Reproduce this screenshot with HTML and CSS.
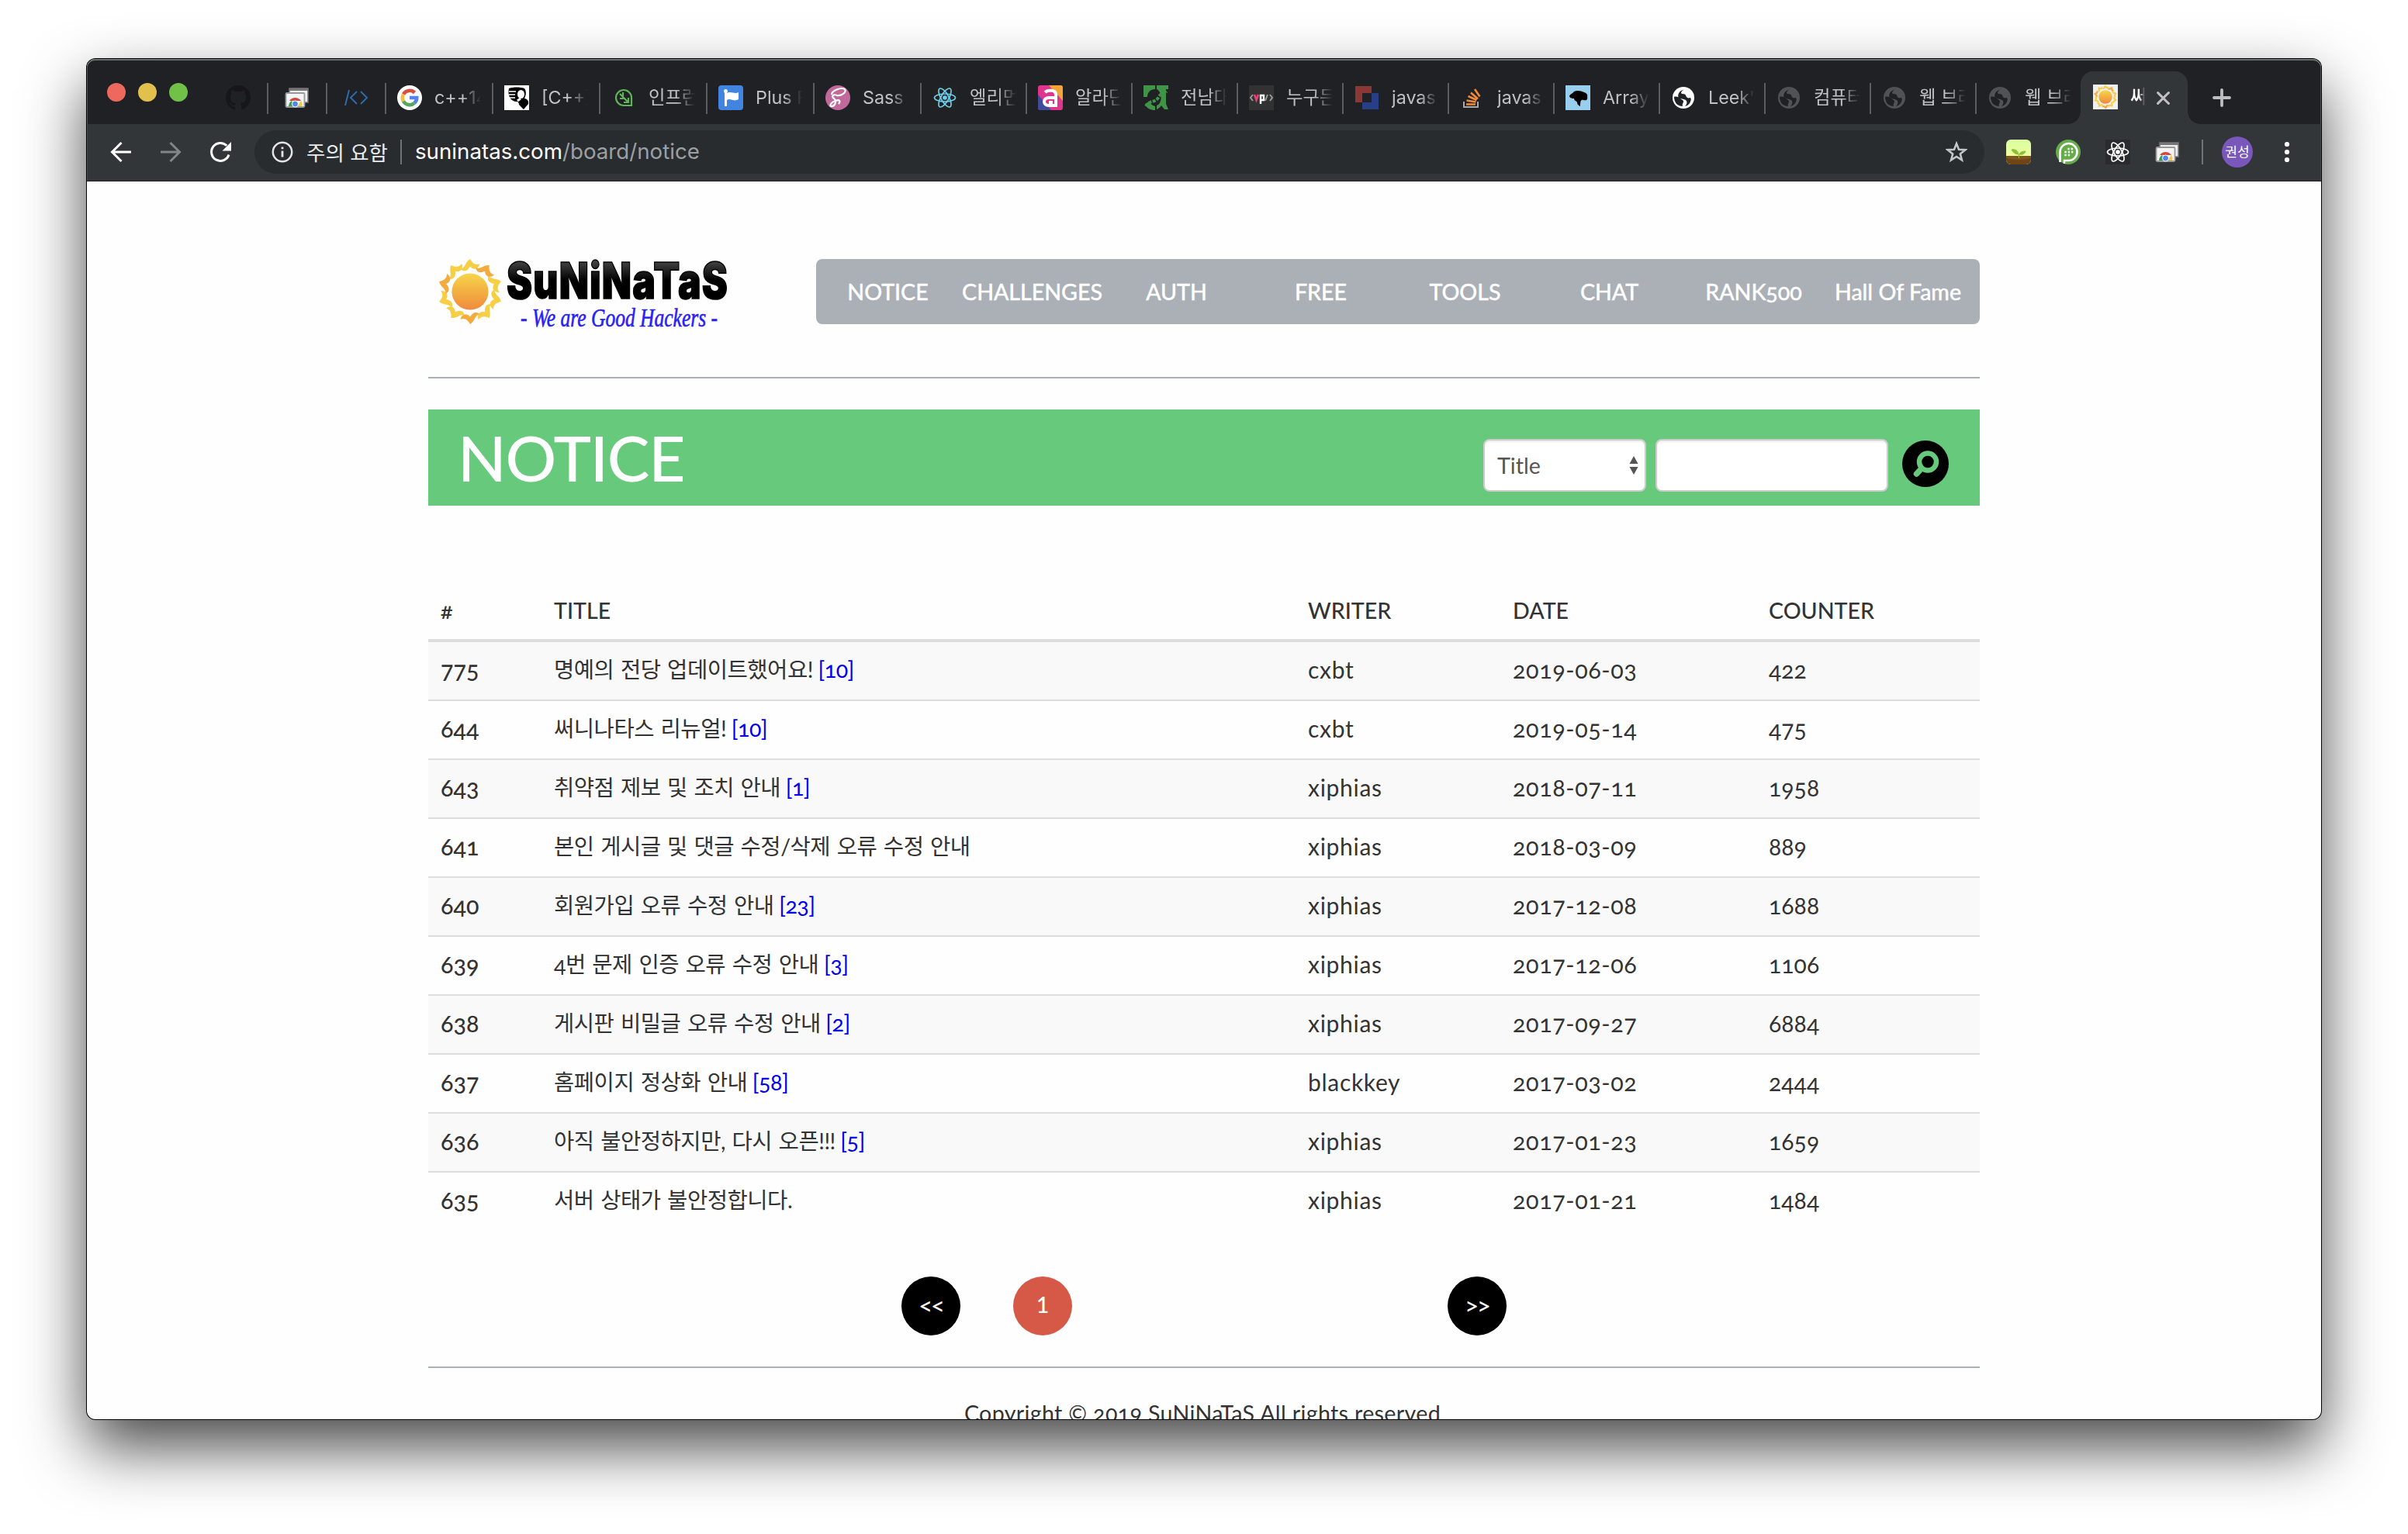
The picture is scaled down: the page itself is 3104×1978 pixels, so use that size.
FILE: index.html
```html
<!DOCTYPE html>
<html lang="ko">
<head>
<meta charset="utf-8">
<title>써니나타스</title>
<link rel="stylesheet" href="styles.css">
</head>
<body>
<svg class="defs" width="0" height="0">
  <defs>
    <linearGradient id="sunFill" x1="0" y1="0" x2="0" y2="1"><stop offset="0" stop-color="#f6d64a"/><stop offset="1" stop-color="#f08a3c"/></linearGradient>
    <linearGradient id="letterFill" x1="0" y1="0" x2="0" y2="1"><stop offset="0.15" stop-color="#4a4a4a"/><stop offset="0.5" stop-color="#000"/></linearGradient>
    <linearGradient id="sky" x1="0" y1="0" x2="0" y2="1"><stop offset="0" stop-color="#d9ffa0"/><stop offset="1" stop-color="#fbfba0"/></linearGradient>
    <path id="flame" d="M-12-28C-6-28-6-37 0-40C3-35 6-32 12-34C10-27 4-26 0-31C-3-26-7-23-12-28Z"/>
    <symbol id="sun" viewBox="-41 -41 82 82">
      <g fill="#f7cf45"><use href="#flame"/><use href="#flame" transform="rotate(72)"/><use href="#flame" transform="rotate(108)"/><use href="#flame" transform="rotate(144)"/><use href="#flame" transform="rotate(216)"/><use href="#flame" transform="rotate(252)"/><use href="#flame" transform="rotate(324)"/></g>
      <g fill="#f3ab3d"><use href="#flame" transform="rotate(36)"/><use href="#flame" transform="rotate(180)"/><use href="#flame" transform="rotate(288)"/></g>
      <circle r="22.5" fill="url(#sunFill)"/>
    </symbol>
    <symbol id="chromeShot" viewBox="0 0 32 32">
      <path d="M6 4h24v18H6z" fill="#eee" stroke="#777" stroke-width="1.6"/><path d="M6 4h24v3H6z" fill="#777"/>
      <rect x="1.500" y="10" width="24" height="18" rx="1.500" fill="#f4f4f4" stroke="#999" stroke-width="1.800"/>
      <path d="M5 27a8.500 8.500 0 0 1 4-7l3.500 7z" fill="#3d9e57"/><path d="M6 20a9 9 0 0 1 15 0z" fill="#cf4b3d"/><path d="M16 27l5-7a9 9 0 0 1 1.500 7z" fill="#f1c94b"/>
      <circle cx="13.500" cy="24" r="4" fill="#4f86e8" stroke="#fff" stroke-width="1"/>
    </symbol>
    <symbol id="atom" viewBox="0 0 32 32">
      <g fill="none" stroke="currentColor" stroke-width="1.700"><ellipse cx="16" cy="16" rx="13.500" ry="5"/><ellipse cx="16" cy="16" rx="13.500" ry="5" transform="rotate(60 16 16)"/><ellipse cx="16" cy="16" rx="13.500" ry="5" transform="rotate(120 16 16)"/></g>
      <circle cx="16" cy="16" r="2.800" fill="currentColor"/>
    </symbol>
    <symbol id="globe" viewBox="0 0 32 32">
      <circle cx="16" cy="16" r="14" fill="currentColor"/>
      <path class="land" d="M4 15c3-1 6 0 8 2c1 2 4 1 4 4c0 2-2 3-1 6C8 27 4 22 4 15zM18 5c-3 1-5 3-5 5c1 2 5 0 6 3c1 3 3 4 6 3c1 1 1 3 0 5c-1 3-3 4-4 5l-3 1c3-3 3-6 1-8c-3-2-7-1-9-3c-2-3 0-7 3-9z"/>
    </symbol>
    <symbol id="stack" viewBox="0 0 32 32">
      <path d="M5 21v7h18v-7" fill="none" stroke="#a5a7a9" stroke-width="2"/>
      <path d="M8 24.500h12M8.500 19.500l12 2M10.500 14l11 5M14 9.500l9 8M19 5l6.500 9.500" stroke="#ee8a3a" stroke-width="2.600" fill="none"/>
    </symbol>
  </defs>
</svg>

<div class="window">
  <div class="tabstrip">
    <div class="lights"><i class="red"></i><i class="yellow"></i><i class="green"></i></div>
    <div class="tab pinned"><svg class="icon" viewBox="0 0 16 16"><path fill="#17171a" d="M8 0C3.580 0 0 3.580 0 8c0 3.540 2.290 6.530 5.470 7.590.4.070.55-.17.55-.38v-1.490c-2.010.37-2.530-.49-2.690-.94-.09-.23-.48-.94-.82-1.130-.28-.15-.68-.52-.01-.53.63-.01 1.080.58 1.230.82.72 1.210 1.870.87 2.330.66.070-.52.28-.87.51-1.070-1.780-.2-3.640-.89-3.640-3.950 0-.87.31-1.590.82-2.150-.08-.2-.36-1.020.08-2.120 0 0 .67-.21 2.200.82a7.600 7.600 0 0 1 4 0c1.530-1.040 2.200-.82 2.200-.82.44 1.100.16 1.920.08 2.120.51.560.82 1.270.82 2.150 0 3.070-1.870 3.750-3.650 3.950.29.25.54.73.54 1.480v2.190c0 .21.15.46.55.38A8 8 0 0 0 16 8c0-4.420-3.580-8-8-8z"/></svg></div>
    <div class="tab pinned"><svg class="icon"><use href="#chromeShot"/></svg></div>
    <div class="tab pinned"><svg class="icon" viewBox="0 0 32 32"><path d="M7 6L2 26M17 8l-8 8l8 8M22 8l8 8l-8 8" fill="none" stroke="#2b6cab" stroke-width="2"/></svg></div>
    <div class="tab"><svg class="icon" viewBox="0 0 32 32"><circle cx="16" cy="16" r="16" fill="#fff"/><g fill="none" stroke-width="4.600"><path d="M8 11.500A9.200 9.200 0 0 1 22.500 9.500" stroke="#d9503f"/><path d="M8 20.500a9.200 9.200 0 0 1 0-9" stroke="#f2bd42"/><path d="M22 23A9.200 9.200 0 0 1 8 20.500" stroke="#58a55c"/><path d="M16 16h9.200a9.200 9.200 0 0 1-3.200 7" stroke="#5383ec"/></g></svg><span>c++14</span></div>
    <div class="tab"><svg class="icon" viewBox="0 0 32 32"><path fill="#fff" d="M0 0h32v32H0z"/><path d="M6 4c6-2 14-2 20 0c3 4 2 9 0 13c3 0 6 3 5 7l-6 7l-6-6c0-2-1-4-3-4C8 21 4 13 6 4z"/><path d="M6 8h9M6 12h8M7 16h7" stroke="#fff" stroke-width="1.500"/><ellipse cx="21.500" cy="11.500" rx="4.500" ry="5.500" fill="#fff"/><path d="M17 20l4-3" stroke="#fff" stroke-width="3"/></svg><span>[C++]</span></div>
    <div class="tab"><svg class="icon" viewBox="0 0 32 32"><path d="M26 26H16A10 10 0 1 1 26 16zM11 11l11 11M15 9v6M11 17h6M16 22h6v-6" fill="none" stroke="#5eb457" stroke-width="2.200"/></svg><span>인프런</span></div>
    <div class="tab"><svg class="icon" viewBox="0 0 32 32"><rect width="32" height="32" rx="4" fill="#4285e0"/><path d="M8 8v19h3v-8c5-3 8 3 15-1V9c-6 3-9-2-15 1V8z" fill="#fff"/><circle cx="9.500" cy="7.500" r="2.500" fill="#fff"/></svg><span>Plus F</span></div>
    <div class="tab"><svg class="icon" viewBox="0 0 32 32"><circle cx="16" cy="16" r="16" fill="#c0699a"/><path d="M8 12c0-5 12-10 17-7c3 4-5 9-10 8c-5-2-8 1-4 4c5 4 0 11-4 10c-2-2 2-6 6-7c5-2 7 0 4 4" fill="none" stroke="#fff" stroke-width="2.200"/></svg><span>Sass</span></div>
    <div class="tab slim"><svg class="icon cyan"><use href="#atom"/></svg><span>엘리먼</span></div>
    <div class="tab slim"><svg class="icon" viewBox="0 0 32 32"><rect width="32" height="32" rx="3" fill="#e0358c"/><path d="M14 0h15a3 3 0 0 1 3 3v17z" fill="#f3a53c"/><path d="M0 12l17 20H3a3 3 0 0 1-3-3z" fill="#3f4c9c"/><path d="M9 9c3-3 14-4 14 3v14H14c-8 0-8-10 0-10h8M17 20v2h-3" fill="none" stroke="#fff" stroke-width="4"/></svg><span>알라딘</span></div>
    <div class="tab slim"><svg class="icon" viewBox="0 0 32 32"><path d="M0 0h15v5C9 5 5 9 5 15H0zM17 0h15v5h-3v19l3 7h-5l-4-5c-2 3-4 4-6 5v-5c7-2 8-17 0-21zM2 24l5-3c2 3 4 5 8 6v5C9 32 4 30 2 24z" fill="#3f9447"/><path d="M3 27C9 18 15 23 19 16S26 11 30 8" fill="none" stroke="#3f9447" stroke-width="4" stroke-dasharray="4 1.500"/></svg><span>전남대</span></div>
    <div class="tab slim"><svg class="icon" viewBox="0 0 32 32"><path fill="#323232" d="M0 0h32v32H0z"/><path d="M5 12l-3 4l3 4M27 12l3 4l-3 4M24 12l-3 8" fill="none" stroke="#999" stroke-width="2"/><path d="M7 12l2.500 7l2.500-7" fill="none" stroke="#e8407a" stroke-width="2.600"/><path d="M15 24V13h4v6h-4" fill="none" stroke="#fff" stroke-width="2.400"/></svg><span>누구든</span></div>
    <div class="tab slim"><svg class="icon" viewBox="0 0 32 32"><path d="M1 1h21v9H10v12H1z" fill="#8b3733"/><path d="M22 10h9v21H10v-9h12z" fill="#283f87"/></svg><span>javas</span></div>
    <div class="tab slim"><svg class="icon"><use href="#stack"/></svg><span>javas</span></div>
    <div class="tab slim"><svg class="icon" viewBox="0 0 32 32"><path fill="#98cfef" d="M0 0h32v32H0z"/><path d="M5 14c1-3 4-3 6-6c4-2 9-1 13 1c3 1 5 3 4 6c1 4-2 5-5 4c-3-1-4 1-4 8c-2-1-4-2-4-5c-1-2-4-2-4-5c-3 0-5 0-6-3z"/></svg><span>Array</span></div>
    <div class="tab slim"><svg class="icon white"><use href="#globe"/></svg><span>Leek's</span></div>
    <div class="tab slim"><svg class="icon grey"><use href="#globe"/></svg><span>컴퓨터</span></div>
    <div class="tab slim"><svg class="icon grey"><use href="#globe"/></svg><span>웹 브라</span></div>
    <div class="tab slim last"><svg class="icon grey"><use href="#globe"/></svg><span>웹 브라</span></div>
    <div class="tab active"><svg class="icon fav"><use href="#sun"/></svg><span>써</span><svg class="close" viewBox="0 0 16 16"><path d="M1.500 1.500l13 13M14.500 1.500l-13 13" stroke="#bfc1c4" stroke-width="2.800" stroke-linecap="round"/></svg></div>
    <svg class="newtab" viewBox="0 0 24 24"><path d="M12 2v20M2 12h20" stroke="#bcbfc3" stroke-width="3.800" stroke-linecap="round"/></svg>
  </div>

  <div class="toolbar">
    <svg class="icon" viewBox="0 0 32 32"><path d="M29 16H5M16.500 4L4.500 16l12 12" fill="none" stroke="#fff" stroke-width="3"/></svg>
    <svg class="icon" viewBox="0 0 32 32"><path d="M3 16h24M15.500 4l12 12l-12 12" fill="none" stroke="#838689" stroke-width="3"/></svg>
    <svg class="icon" viewBox="0 0 32 32"><path d="M27 19.500a11.500 11.500 0 1 1-2.800-11.700" fill="none" stroke="#fff" stroke-width="3"/><path d="M30 3v11.500H18.500z" fill="#fff"/></svg>
    <div class="omnibox">
      <svg class="info" viewBox="0 0 28 28"><circle cx="14" cy="14" r="12.200" fill="none" stroke="#e2e4e6" stroke-width="2.500"/><path d="M14 12.500v8M14 7.500v2.800" stroke="#e2e4e6" stroke-width="2.800"/></svg>
      <span class="warn">주의 요함</span><i class="bar"></i>
      <span class="url">suninatas.com<em>/board/notice</em></span>
      <svg class="star" viewBox="0 0 28 28"><path d="M14 3l3 7.700 8.300.5-6.500 5.200 2.200 8L14 19.900 7 24.400l2.200-8L2.700 11.200l8.300-.5z" fill="none" stroke="#c3c6ca" stroke-width="2.500"/></svg>
    </div>
    <div class="exts">
      <svg class="icon" viewBox="0 0 32 32"><rect width="32" height="32" rx="6" fill="url(#sky)"/><path d="M0 21h32v5a6 6 0 0 1-6 6H6a6 6 0 0 1-6-6z" fill="#6f4517"/><path d="M0 21h32v3q-16 4-32 0z" fill="#80551f"/><path d="M16.500 24v-5M16 19c-4 0-7-2-9-6c5-1 8 1 9 6zM17 19c1-3 4-4 8-4c-1 3-4 5-8 4z" fill="#8cbf35" stroke="#8cbf35"/></svg>
      <svg class="icon" viewBox="0 0 32 32"><circle cx="16" cy="16" r="16" fill="#67ac4a"/><path d="M5.500 29V15.500A11 11 0 1 1 16 27h-5v4" fill="none" stroke="#fff" stroke-width="2.600"/><path d="M15.300 12h7M11.300 16h11M11.300 20h7" stroke="#fff" stroke-width="2.400" stroke-dasharray="2.400 2"/></svg>
      <svg class="icon react"><use href="#atom"/></svg>
      <svg class="icon"><use href="#chromeShot"/></svg>
    </div>
    <i class="bar"></i>
    <div class="avatar">권성</div>
    <svg class="icon dots" viewBox="0 0 32 32"><g fill="#fff"><circle cx="16" cy="6" r="3.100"/><circle cx="16" cy="16" r="3.100"/><circle cx="16" cy="26" r="3.100"/></g></svg>
  </div>

  <div class="page">
    <header class="site-head">
      <svg class="logo" viewBox="0 0 400 110">
        <use href="#sun" x="11" y="5" width="86" height="86"/>
        <text class="brand" x="101" y="57" textLength="286" lengthAdjust="spacingAndGlyphs">SuNiNaTaS</text>
        <text class="slogan" x="119" y="93" textLength="254" lengthAdjust="spacingAndGlyphs">- We are Good Hackers -</text>
      </svg>
      <nav class="menu"><a>NOTICE</a><a>CHALLENGES</a><a>AUTH</a><a>FREE</a><a>TOOLS</a><a>CHAT</a><a>RANK500</a><a>Hall Of Fame</a></nav>
    </header>
    <section class="banner">
      <h1>NOTICE</h1>
      <div class="search">
        <div class="select">Title<svg viewBox="0 0 12 24"><path d="M6 0l5.500 10H.5zM6 24L.5 14h11z" fill="#555"/></svg></div>
        <div class="field"></div>
        <svg class="go" viewBox="0 0 60 60"><circle cx="30" cy="30" r="30"/><circle cx="33" cy="27.500" r="11" fill="none" stroke="#67c97b" stroke-width="6.500"/><path d="M25 36l-6.500 7" stroke="#67c97b" stroke-width="7.500" stroke-linecap="round"/></svg>
      </div>
    </section>
    <table class="board">
      <colgroup><col class="c-num"><col class="c-title"><col class="c-writer"><col class="c-date"><col></colgroup>
      <thead><tr><th>#</th><th>TITLE</th><th>WRITER</th><th>DATE</th><th>COUNTER</th></tr></thead>
      <tbody>
        <tr><td>775</td><td>명예의 전당 업데이트했어요! <a>[10]</a></td><td>cxbt</td><td>2019-06-03</td><td>422</td></tr>
        <tr><td>644</td><td>써니나타스 리뉴얼! <a>[10]</a></td><td>cxbt</td><td>2019-05-14</td><td>475</td></tr>
        <tr><td>643</td><td>취약점 제보 및 조치 안내 <a>[1]</a></td><td>xiphias</td><td>2018-07-11</td><td>1958</td></tr>
        <tr><td>641</td><td>본인 게시글 및 댓글 수정/삭제 오류 수정 안내</td><td>xiphias</td><td>2018-03-09</td><td>889</td></tr>
        <tr><td>640</td><td>회원가입 오류 수정 안내 <a>[23]</a></td><td>xiphias</td><td>2017-12-08</td><td>1688</td></tr>
        <tr><td>639</td><td>4번 문제 인증 오류 수정 안내 <a>[3]</a></td><td>xiphias</td><td>2017-12-06</td><td>1106</td></tr>
        <tr><td>638</td><td>게시판 비밀글 오류 수정 안내 <a>[2]</a></td><td>xiphias</td><td>2017-09-27</td><td>6884</td></tr>
        <tr><td>637</td><td>홈페이지 정상화 안내 <a>[58]</a></td><td>blackkey</td><td>2017-03-02</td><td>2444</td></tr>
        <tr><td>636</td><td>아직 불안정하지만, 다시 오픈!!! <a>[5]</a></td><td>xiphias</td><td>2017-01-23</td><td>1659</td></tr>
        <tr><td>635</td><td>서버 상태가 불안정합니다.</td><td>xiphias</td><td>2017-01-21</td><td>1484</td></tr>
      </tbody>
    </table>
    <div class="pager"><a class="arrow">&lt;&lt;</a><div class="pages"><a class="current">1</a></div><a class="arrow">&gt;&gt;</a></div>
    <footer>Copyright © 2019 SuNiNaTaS All rights reserved</footer>
  </div>
</div>
</body>
</html>
```
FILE: styles.css
```css
* { box-sizing: border-box; }
html, body { margin: 0; background: #fff; }
body { width: 3104px; height: 1978px; overflow: hidden; padding: 76px 112px 148px; }
.defs { display: block; height: 0; }
.window {
  height: 1754px; overflow: hidden; border-radius: 11px; background: #fefefe;
  box-shadow: 0 0 0 1px #000, 0 36px 80px rgba(0, 0, 0, .72);
}
.icon { width: 32px; height: 32px; flex: none; display: block; }

/* tab strip */
.tabstrip {
  height: 84px; background: #202124; display: flex; align-items: flex-start; padding-top: 16px;
  box-shadow: inset 0 2px #6b706e, inset 1px 0 #55585a, inset -1px 0 #55585a; border-radius: 11px 11px 0 0;
  font: 23.300px Inter, "Noto Sans CJK KR", sans-serif; color: #bfc1c5;
}
.lights { display: flex; gap: 16px; padding: 15px 0 0 26px; width: 158px; }
.lights i { width: 24px; height: 24px; border-radius: 50%; }
.red { background: #ed695e; }
.yellow { background: #e1c04c; }
.green { background: #71c048; }
.tab {
  flex: none; width: 138px; height: 40px; margin-top: 15px; padding-left: 14px;
  display: flex; align-items: center; border-right: 2px solid #5a5c60;
}
.tab .icon { position: relative; top: -1px; }
.tab.pinned { width: 76px; padding: 0; justify-content: center; }
.tab.slim { width: 136px; }
.tab.last { border-color: transparent; width: 134px; }
.tab span {
  margin-left: 16px; width: 60px; height: 36px; line-height: 34px; overflow: hidden; white-space: nowrap;
  -webkit-mask-image: linear-gradient(90deg, #000 60%, transparent); mask-image: linear-gradient(90deg, #000 60%, transparent);
}
.tab.active {
  position: relative; width: 138px; height: 68px; margin-top: 0; padding: 0 0 0 16px; border: 0;
  background: #323639; border-radius: 16px 16px 0 0; color: #fff;
}
.tab.active span { width: 19px; font-weight: 500; }
.tab.active::before, .tab.active::after {
  content: ""; position: absolute; bottom: 0; width: 16px; height: 16px; left: -16px;
  background: radial-gradient(circle at 0 0, transparent 15.500px, #323639 16px);
}
.tab.active::after { left: 138px; background: radial-gradient(circle at 100% 0, transparent 15.500px, #323639 16px); }
.fav { background: #f1f1f1; }
.close { width: 17px; height: 17px; margin-left: 15px; }
.newtab { width: 24px; height: 24px; margin: 22px 0 0 32px; }
.cyan { color: #6dcdea; background: #222; }
.white { color: #fff; }
.grey { color: #505256; }
.land { fill: #202124; }

/* toolbar */
.toolbar {
  height: 74px; background: #323639; border-bottom: 1px solid #231f22; display: flex; align-items: center;
  padding: 0 28px 1px; box-shadow: inset 1px 0 #4a4d50, inset -1px 0 #4a4d50;
}
.toolbar > .icon + .icon { margin-left: 32px; }
.omnibox {
  width: 2230px; height: 56px; margin-left: 28px; padding: 0 22px; border-radius: 28px; background: #282c2f;
  display: flex; align-items: center; font: 27.700px Inter, "Noto Sans CJK KR", sans-serif; color: #fff;
}
.info, .star { width: 28px; height: 28px; flex: none; }
.star { margin-left: auto; }
.warn { width: 104px; margin: -2px 17px 0 17px; font-size: 26.500px; white-space: nowrap; color: #e8eaed; }
.bar { width: 2px; height: 32px; background: #707376; flex: none; }
.url { margin: -2px 0 0 17px; }
.url em { font-style: normal; color: #9aa0a3; }
.exts { display: flex; gap: 32px; margin: 0 28px; }
.react { color: #fff; background: #292b2e; border-radius: 2px; }
.avatar {
  width: 40px; height: 40px; margin-left: 24px; border-radius: 50%; background: #7a57bb; color: #fff;
  font: 17px/38px "Noto Sans CJK KR", sans-serif; text-align: center;
}
.dots { margin-left: 28px; }

/* page */
.page {
  width: 2000px; margin: 0 auto; padding-top: 100px; color: #333;
  font: 28.600px/40px Lato, "Noto Sans CJK KR", sans-serif; font-variant-numeric: oldstyle-nums;
}
.site-head { display: flex; justify-content: space-between; height: 154px; border-bottom: 2px solid #abb0b7; }
.logo { width: 400px; height: 110px; margin-top: -6px; }
.brand { font: 900 64px Inter, sans-serif; fill: url(#letterFill); stroke: #000; stroke-width: 1.500px; letter-spacing: 1.500px; }
.slogan { font: italic 33px "Liberation Serif", serif; fill: #2a20f5; stroke: #2a20f5; stroke-width: .6px; }
.menu {
  width: 1500px; height: 84px; border-radius: 8px; background: #abb0b7; color: #fff;
  display: grid; grid-template-columns: repeat(8, 186px); align-items: center; text-align: center;
  -webkit-text-stroke: .5px #fff;
}
.menu a { margin-left: -1px; }
.banner {
  height: 124px; margin-top: 40px; padding: 0 40px; background: #67c97b; color: #fff;
  display: flex; justify-content: space-between;
}
.banner h1 { margin: -1px 0 0 -2px; font: 500 82px/124px Lato, sans-serif; letter-spacing: -1.300px; }
.search { display: flex; padding-top: 38px; color: #555; }
.select, .field { height: 68px; background: #fff; border: 2px solid #ccc; border-radius: 8px; box-shadow: inset 0 2px 2px rgba(0, 0, 0, .075); }
.select { width: 210px; padding: 0 8px 0 16px; display: flex; align-items: center; justify-content: space-between; }
.select svg { width: 12px; height: 24px; }
.field { width: 300px; margin: 0 18px 0 12px; }
.go { width: 60px; height: 60px; margin-top: 2px; }

.board { width: 2000px; margin-top: 100px; table-layout: fixed; border-spacing: 0; }
.c-num { width: 146px; }
.c-title { width: 972px; }
.c-writer { width: 264px; }
.c-date { width: 330px; }
th, td { padding: 0 16px; text-align: left; white-space: nowrap; }
th { height: 76px; padding-bottom: 2px; border-bottom: 4px solid #ddd; font-weight: 500; }
td { height: 76px; padding-bottom: 5px; border-bottom: 2px solid #ddd; }
tbody tr:nth-child(odd) { background: #f9f9f9; }
tbody tr:last-child td { height: 74px; border: 0; }
td:nth-child(1) { font-size: 30.500px; font-weight: 500; }
td:nth-child(2) { letter-spacing: -.5px; word-spacing: 1.700px; }
td:nth-child(3) { font-size: 30px; letter-spacing: .7px; }
td:nth-child(4) { font-size: 30.500px; letter-spacing: .6px; }
td:nth-child(5) { font-size: 30px; letter-spacing: .1px; }
td a { color: #00e; margin-left: -2px; }

.pager { width: 780px; margin: 60px auto 40px; display: flex; justify-content: space-between; color: #fff; font-weight: 500; }
.pager a { width: 76px; height: 76px; border-radius: 50%; background: #000; text-align: center; line-height: 73px; }
.pager .arrow { font-size: 33px; font-weight: 400; letter-spacing: -2px; line-height: 70px; }
.pages { flex: 1; padding-left: 68px; display: flex; }
.pager .current { background: #d65947; font-variant-numeric: lining-nums; }
footer { border-top: 2px solid #abb0b7; padding: 38px 4px 0 0; text-align: center; letter-spacing: .35px; }
```
